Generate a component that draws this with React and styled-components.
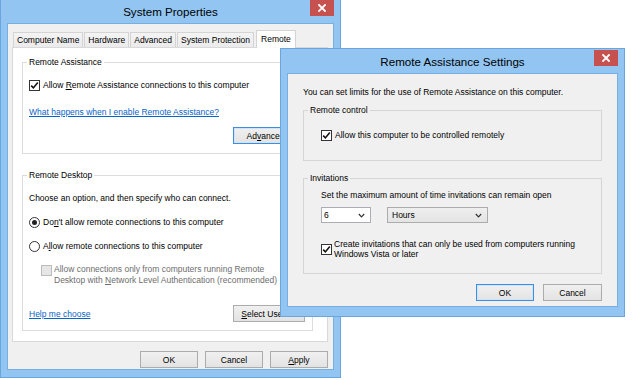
import React from "react";
import styled, { createGlobalStyle, css } from "styled-components";

const GlobalStyle = createGlobalStyle`
  html, body {
    margin: 0;
    padding: 0;
    background: #fff;
    overflow: hidden;
  }
  body {
    font-family: "Liberation Sans", Arial, sans-serif;
    font-size: 8.5px;
    color: #000;
  }
`;

const Desktop = styled.div`
  position: relative;
  width: 640px;
  height: 380px;
  overflow: hidden;
  background: #fff;
`;

// windows sit on a free desktop, so their place is the content itself
const Window = styled.div`
  position: absolute;
  left: ${(p) => p.$x}px;
  top: ${(p) => p.$y}px;
  width: ${(p) => p.$w}px;
  height: ${(p) => p.$h}px;
  box-sizing: border-box;
  display: flex;
  flex-direction: column;
  padding: 0 6px ${(p) => p.$bottom}px;
  background: #92c5f2;
  border: 1px solid #6aa5dc;
`;

const TitleBar = styled.div`
  height: 24px;
  flex: none;
  display: grid;
  grid-template-columns: 1fr auto 1fr;
  align-items: center;
`;

const Title = styled.div`
  grid-column: 2;
  font-size: 11.6px;
  color: #000;
  white-space: nowrap;
`;

const CloseButton = styled.div`
  grid-column: 3;
  justify-self: end;
  align-self: start;
  margin-top: 1px;
  width: 24px;
  height: 16px;
  background: #c7514f;
  display: flex;
  align-items: center;
  justify-content: center;
`;

const Client = styled.div`
  flex: 1;
  min-height: 0;
  display: flex;
  flex-direction: column;
  background: #f0f0f0;
  border: 1px solid #78afe2;
`;

const TabStrip = styled.div`
  display: flex;
  align-items: flex-end;
  height: 17px;
  margin-top: 6px;
  padding-left: 5px;
`;

const Tab = styled.div`
  height: 15px;
  box-sizing: border-box;
  padding: 0 3px;
  margin-right: 1px;
  display: flex;
  align-items: center;
  white-space: nowrap;
  border: 1px solid #d4d4d4;
  border-bottom: none;
  background: linear-gradient(#f4f4f4, #ebebeb);
  ${(p) =>
    p.$active &&
    css`
      height: 18px;
      margin-bottom: -1px;
      padding: 0 4px 2px;
      margin-left: 1px;
      position: relative;
      z-index: 1;
      background: #fff;
    `}
`;

const TabPanel = styled.div`
  margin: 0 5px 0 4px;
  background: #fff;
  border: 1px solid #d9d9d9;
  padding: 14px 14px 10px 9px;
`;

const Group = styled.div`
  display: flex;
  flex-direction: column;
  border: 1px solid ${(p) => p.$line};
  padding: 0 7px ${(p) => p.$pb}px 0;
  margin-top: ${(p) => p.$mt || 0}px;
`;

const Caption = styled.div`
  align-self: flex-start;
  margin: -7px 0 0 4px;
  padding: 0 2px;
  line-height: 12px;
  background: ${(p) => p.$bg};
`;

const GroupBody = styled.div`
  display: flex;
  flex-direction: column;
  padding-left: ${(p) => p.$indent}px;
`;

const Row = styled.div`
  display: flex;
  align-items: ${(p) => (p.$top ? "flex-start" : "center")};
  justify-content: ${(p) =>
    p.$end ? "flex-end" : p.$between ? "space-between" : "flex-start"};
  gap: ${(p) => (p.$gap != null ? p.$gap : 3)}px;
  min-height: 14px;
  margin-top: ${(p) => p.$mt || 0}px;
  padding-left: ${(p) => p.$pl || 0}px;
  white-space: nowrap;
`;

const Text = styled.div`
  line-height: ${(p) => p.$lh || 14}px;
  color: ${(p) => (p.$disabled ? "#6d6d6d" : "#000")};
`;

const Key = styled.span`
  text-decoration: underline;
`;

const Link = styled.span`
  color: #0a64c8;
  text-decoration: underline;
  line-height: 14px;
`;

const Box = styled.div`
  flex: none;
  width: 11px;
  height: 11px;
  box-sizing: border-box;
  margin-top: ${(p) => p.$mt || 0}px;
  border: 1px solid ${(p) => (p.$disabled ? "#bcbcbc" : "#333")};
  background: ${(p) => (p.$disabled ? "#e6e6e6" : "#fff")};
  display: flex;
  align-items: center;
  justify-content: center;
`;

const RadioCircle = styled.div`
  flex: none;
  width: 11px;
  height: 11px;
  box-sizing: border-box;
  border-radius: 50%;
  border: 1px solid #333;
  background: #fff;
  display: flex;
  align-items: center;
  justify-content: center;
`;

const RadioDot = styled.div`
  width: 5px;
  height: 5px;
  border-radius: 50%;
  background: #222;
`;

const Button = styled.div`
  width: ${(p) => p.$w}px;
  height: 17px;
  flex: none;
  box-sizing: border-box;
  display: flex;
  align-items: center;
  justify-content: center;
  white-space: nowrap;
  overflow: hidden;
  border: 1px solid ${(p) => (p.$focused ? "#3d8ee0" : "#acacac")};
  background: linear-gradient(#f0f0f0, #e3e3e3);
  ${(p) =>
    p.$focused &&
    css`
      box-shadow: inset 0 0 0 1px #cfe4f7;
    `}
`;

const ButtonBar = styled.div`
  display: flex;
  justify-content: flex-end;
  gap: ${(p) => p.$gap}px;
  margin-top: ${(p) => p.$mt}px;
  padding-right: ${(p) => p.$pr}px;
`;

const Combo = styled.div`
  width: ${(p) => p.$w}px;
  height: 16px;
  box-sizing: border-box;
  display: flex;
  align-items: center;
  justify-content: space-between;
  padding: 0 5px 0 ${(p) => p.$pl}px;
  border: 1px solid ${(p) => (p.$flat ? "#acacac" : "#abadb3")};
  background: ${(p) => (p.$flat ? "linear-gradient(#efefef, #e4e4e4)" : "#fff")};
`;

const Intro = styled.div`
  line-height: 14px;
  margin-top: 11px;
`;

const DialogBody = styled.div`
  display: flex;
  flex-direction: column;
  padding: 0 15px 0 15px;
`;

const CloseIcon = () => (
  <svg width="8" height="8" viewBox="0 0 8 8">
    <path d="M1 1L7 7M7 1L1 7" stroke="#fff" strokeWidth="1.8" strokeLinecap="square" />
  </svg>
);

const Chevron = () => (
  <svg width="7" height="5" viewBox="0 0 7 5">
    <path d="M0.8 1L3.5 3.8L6.2 1" fill="none" stroke="#333" strokeWidth="1.2" />
  </svg>
);

const CheckBox = ({ checked, disabled, mt }) => (
  <Box $disabled={disabled} $mt={mt}>
    {checked && (
      <svg width="9" height="9" viewBox="0 0 9 9">
        <path d="M1.2 4.6L3.4 6.9L7.8 1.6" fill="none" stroke="#111" strokeWidth="1.6" />
      </svg>
    )}
  </Box>
);

const Radio = ({ checked }) => <RadioCircle>{checked && <RadioDot />}</RadioCircle>;

const tabs = ["Computer Name", "Hardware", "Advanced", "System Protection", "Remote"];

export default function App() {
  return (
    <>
      <GlobalStyle />
      <Desktop>
        <Window $x={0} $y={-2} $w={341} $h={380} $bottom={7}>
          <TitleBar>
            <Title>System Properties</Title>
            <CloseButton>
              <CloseIcon />
            </CloseButton>
          </TitleBar>
          <Client>
            <TabStrip>
              {tabs.map((t) => (
                <Tab key={t} $active={t === "Remote"}>
                  {t}
                </Tab>
              ))}
            </TabStrip>
            <TabPanel>
              <Group $line="#dcdcdc" $pb={9}>
                <Caption $bg="#fff">Remote Assistance</Caption>
                <GroupBody $indent={6}>
                  <Row $mt={10}>
                    <CheckBox checked />
                    <Text>
                      Allow <Key>R</Key>emote Assistance connections to this computer
                    </Text>
                  </Row>
                  <Row $mt={13}>
                    <Link>What happens when I enable Remote Assistance?</Link>
                  </Row>
                  <Row $mt={8} $end>
                    <Button $w={72} $focused>
                      Ad<Key>v</Key>anced...
                    </Button>
                  </Row>
                </GroupBody>
              </Group>

              <Group $line="#dcdcdc" $pb={8} $mt={21}>
                <Caption $bg="#fff">Remote Desktop</Caption>
                <GroupBody $indent={6}>
                  <Row $mt={10}>
                    <Text>Choose an option, and then specify who can connect.</Text>
                  </Row>
                  <Row $mt={10}>
                    <Radio checked />
                    <Text>
                      Do<Key>n</Key>'t allow remote connections to this computer
                    </Text>
                  </Row>
                  <Row $mt={10}>
                    <Radio />
                    <Text>
                      A<Key>l</Key>low remote connections to this computer
                    </Text>
                  </Row>
                  <Row $mt={11} $top $pl={12} $gap={2}>
                    <CheckBox disabled mt={1} />
                    <Text $disabled $lh={11}>
                      Allow connections only from computers running Remote
                      <br />
                      Desktop with <Key>N</Key>etwork Level Authentication (recommended)
                    </Text>
                  </Row>
                  <Row $mt={19} $between>
                    <Link>Help me choose</Link>
                    <Button $w={72}>
                      <Key>S</Key>elect Users...
                    </Button>
                  </Row>
                </GroupBody>
              </Group>
            </TabPanel>
            <ButtonBar $gap={7} $mt={9} $pr={5}>
              <Button $w={58}>OK</Button>
              <Button $w={58}>Cancel</Button>
              <Button $w={58}>
                <Key>A</Key>pply
              </Button>
            </ButtonBar>
          </Client>
        </Window>

        <Window $x={280} $y={48} $w={345} $h={269} $bottom={9}>
          <TitleBar>
            <Title>Remote Assistance Settings</Title>
            <CloseButton>
              <CloseIcon />
            </CloseButton>
          </TitleBar>
          <Client>
            <DialogBody>
              <Intro>You can set limits for the use of Remote Assistance on this computer.</Intro>

              <Group $line="#d5d5d5" $pb={18} $mt={11}>
                <Caption $bg="#f0f0f0">Remote control</Caption>
                <GroupBody $indent={17}>
                  <Row $mt={12}>
                    <CheckBox checked />
                    <Text>Allow this computer to be controlled remotely</Text>
                  </Row>
                </GroupBody>
              </Group>

              <Group $line="#d5d5d5" $pb={14} $mt={17}>
                <Caption $bg="#f0f0f0">Invitations</Caption>
                <GroupBody $indent={17}>
                  <Row $mt={4}>
                    <Text>Set the maximum amount of time invitations can remain open</Text>
                  </Row>
                  <Row $mt={5} $gap={16}>
                    <Combo $w={50} $pl={2}>
                      <span>6</span>
                      <Chevron />
                    </Combo>
                    <Combo $w={101} $pl={4} $flat>
                      <span>Hours</span>
                      <Chevron />
                    </Combo>
                  </Row>
                  <Row $mt={16} $gap={2}>
                    <CheckBox checked />
                    <Text $lh={10}>
                      Create invitations that can only be used from computers running
                      <br />
                      Windows Vista or later
                    </Text>
                  </Row>
                </GroupBody>
              </Group>

              <ButtonBar $gap={9} $mt={10} $pr={0}>
                <Button $w={58} $focused>
                  OK
                </Button>
                <Button $w={59}>Cancel</Button>
              </ButtonBar>
            </DialogBody>
          </Client>
        </Window>
      </Desktop>
    </>
  );
}
